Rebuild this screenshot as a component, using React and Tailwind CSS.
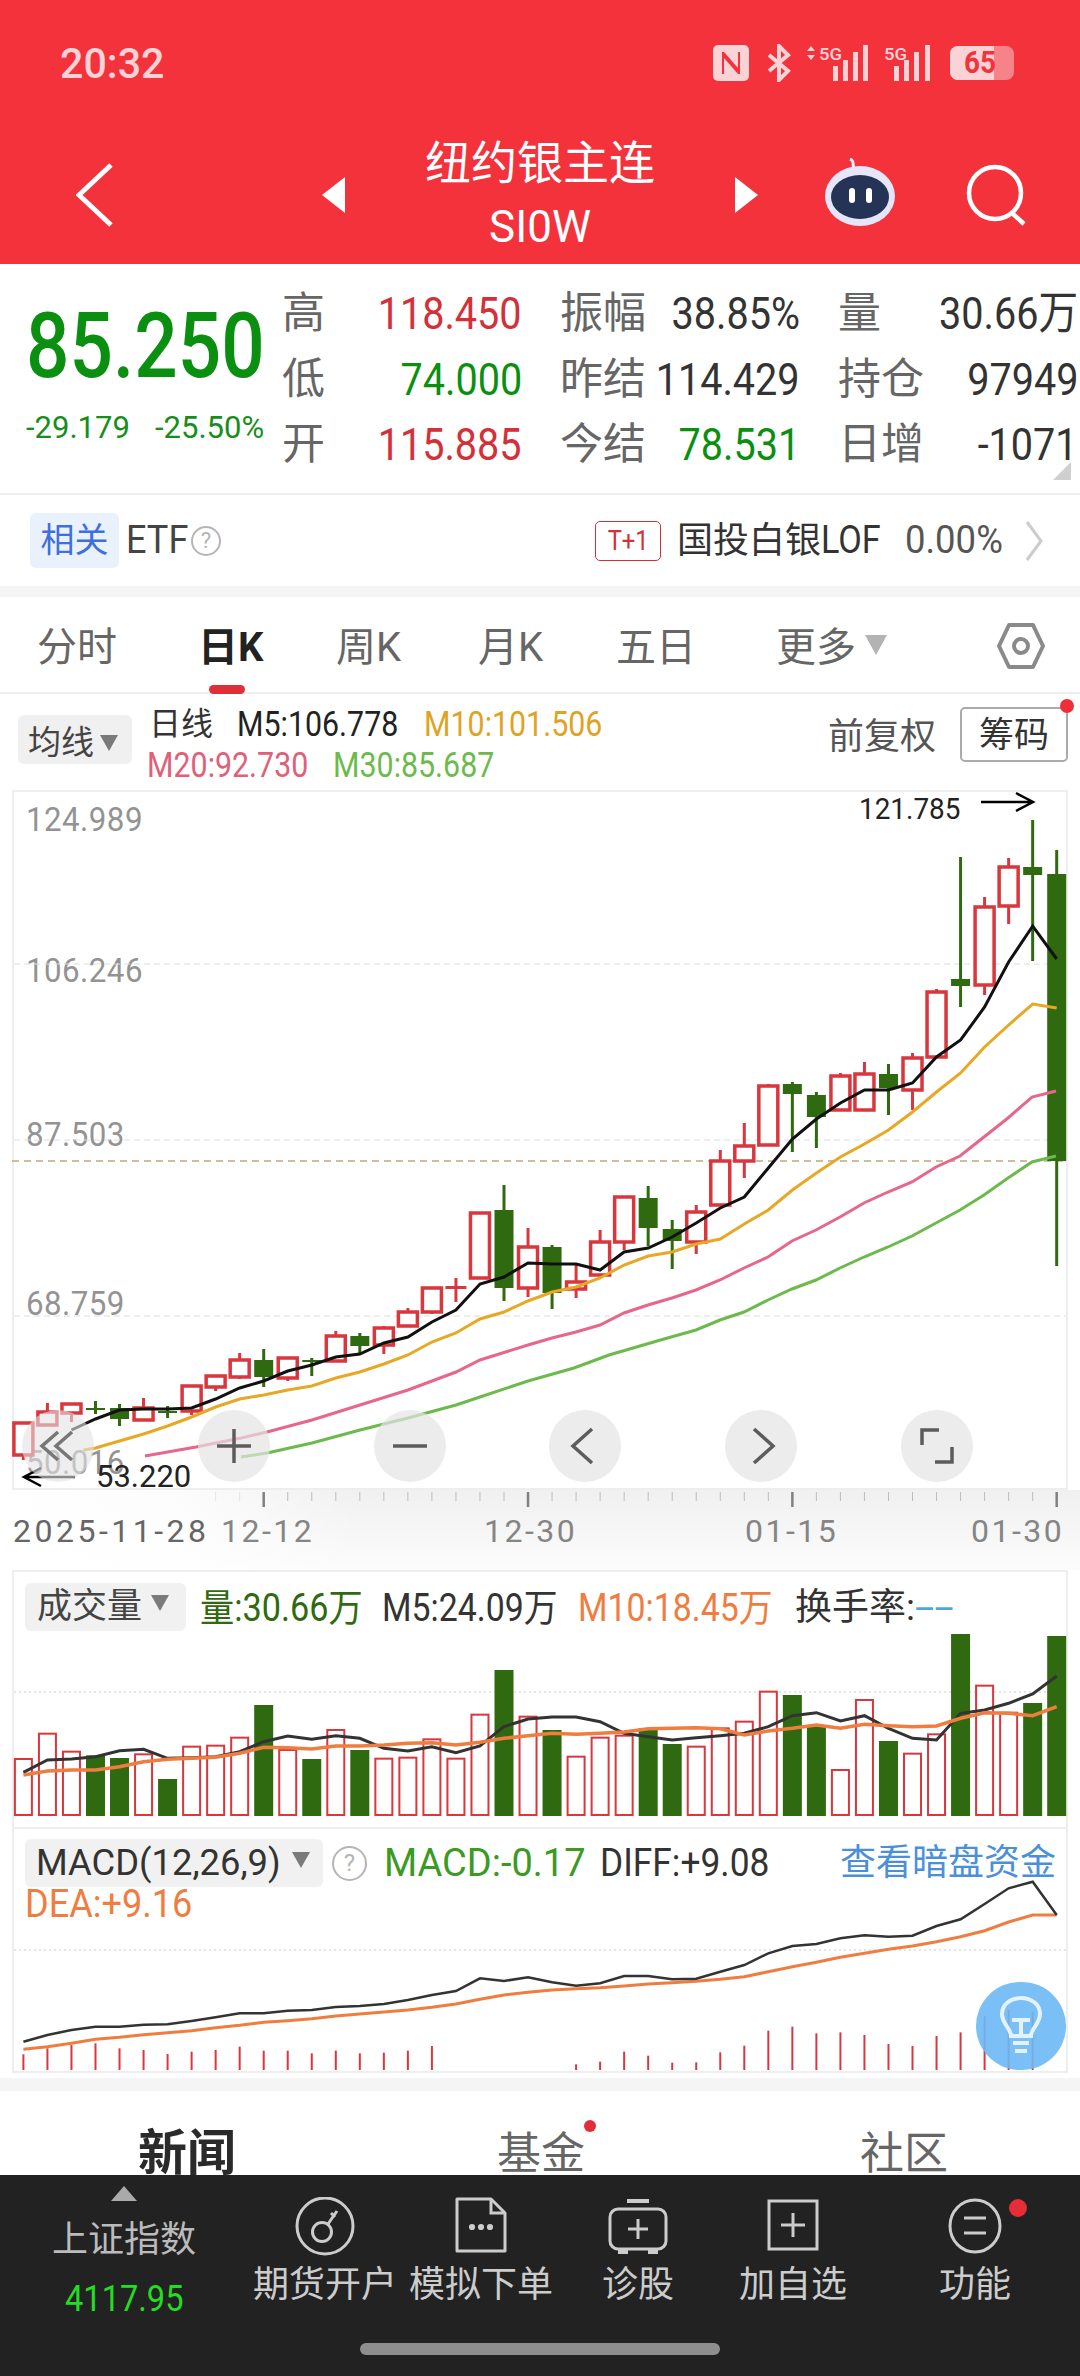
import React from "react";

const vx = (i) => 23.4 + 24.03 * i;
const RED = "#d9363e";
const GREEN = "#2f6a10";

const candles = [
  [1423, 1455, 1423, 1460, 1],
  [1412, 1425, 1403, 1425, 1],
  [1404, 1413, 1404, 1422, 1],
  [1408, 1409, 1401, 1414, 0],
  [1408, 1419, 1404, 1426, 0],
  [1408, 1420, 1398, 1420, 1],
  [1411, 1412, 1406, 1418, 0],
  [1386, 1411, 1386, 1415, 1],
  [1376, 1387, 1376, 1391, 1],
  [1360, 1377, 1353, 1379, 1],
  [1360, 1377, 1349, 1387, 0],
  [1358, 1378, 1358, 1381, 1],
  [1360, 1361, 1358, 1376, 0],
  [1336, 1361, 1331, 1361, 1],
  [1336, 1346, 1333, 1353, 0],
  [1328, 1345, 1326, 1354, 1],
  [1312, 1326, 1308, 1326, 1],
  [1288, 1312, 1288, 1314, 1],
  [1286, 1288, 1278, 1302, 1],
  [1213, 1278, 1213, 1278, 1],
  [1210, 1288, 1185, 1301, 0],
  [1247, 1288, 1228, 1297, 1],
  [1247, 1293, 1245, 1309, 0],
  [1282, 1289, 1265, 1298, 1],
  [1242, 1275, 1230, 1275, 1],
  [1197, 1242, 1197, 1250, 1],
  [1198, 1228, 1186, 1246, 0],
  [1229, 1241, 1220, 1269, 0],
  [1212, 1242, 1205, 1254, 1],
  [1161, 1205, 1150, 1205, 1],
  [1146, 1161, 1123, 1178, 1],
  [1086, 1145, 1084, 1146, 1],
  [1084, 1094, 1082, 1152, 0],
  [1095, 1117, 1092, 1148, 0],
  [1076, 1110, 1073, 1110, 1],
  [1074, 1110, 1062, 1110, 1],
  [1074, 1088, 1064, 1115, 0],
  [1058, 1090, 1053, 1110, 1],
  [992, 1057, 989, 1057, 1],
  [979, 986, 857, 1007, 0],
  [907, 985, 897, 995, 1],
  [867, 906, 858, 924, 1],
  [867, 875, 820, 961, 0],
  [874, 1161, 850, 1266, 0],
];

const ma5 = [[2,1430],[3,1419],[4,1410],[5,1409],[6,1409],[7,1408],[8,1399],[9,1388],[10,1381],[11,1371],[12,1365],[13,1357],[14,1354],[15,1343],[16,1337],[17,1322],[18,1310],[19,1284],[20,1277],[21,1263],[22,1264],[23,1264],[24,1270],[25,1252],[26,1248],[27,1237],[28,1223],[29,1208],[30,1197],[31,1168],[32,1139],[33,1119],[34,1103],[35,1090],[36,1090],[37,1083],[38,1057],[39,1040],[40,1007],[41,962],[42,926],[43,959]];
const ma10 = [[2.5,1450],[3,1448],[4,1441],[5,1434],[6,1426],[7,1417],[8,1407],[9,1399],[10,1395],[11,1390],[12,1386],[13,1378],[14,1372],[15,1364],[16,1355],[17,1342],[18,1333],[19,1319],[20,1312],[21,1301],[22,1292],[23,1287],[24,1278],[25,1265],[26,1256],[27,1252],[28,1244],[29,1239],[30,1224],[31,1210],[32,1190],[33,1173],[34,1157],[35,1144],[36,1130],[37,1112],[38,1092],[39,1073],[40,1047],[41,1025],[42,1004],[43,1008]];
const ma20 = [[145,1456],[196,1447],[241,1438],[267,1432],[312,1420],[360,1405],[408,1390],[456,1372],[480,1360],[528,1345],[552,1338],[576,1332],[600,1325],[624,1313],[648,1305],[672,1298],[696,1290],[720,1280],[744,1268],[768,1257],[792,1241],[816,1230],[840,1217],[864,1203],[888,1192],[912,1182],[936,1167],[960,1156],[984,1137],[1008,1118],[1032,1097],[1056,1091]];
const ma30 = [[241,1457],[267,1453],[312,1443],[360,1430],[408,1418],[456,1405],[480,1397],[528,1381],[574,1368],[609,1355],[664,1339],[696,1330],[720,1320],[744,1312],[768,1300],[792,1289],[816,1280],[840,1268],[864,1257],[888,1247],[912,1236],[936,1223],[960,1210],[984,1195],[1008,1178],[1032,1162],[1056,1156]];

const pts = (a) => a.map(([i, y]) => `${vx(i).toFixed(1)},${y}`).join(" ");
const ptsXY = (a) => a.map(([x, y]) => `${x},${y}`).join(" ");
const seq = (a, f) => a.map((z, i) => `${vx(i).toFixed(1)},${f(z).toFixed(1)}`).join(" ");

const volTops = [[567,1],[491,1],[545,1],[556,0],[564,0],[553,1],[627,0],[530,1],[527,1],[503,1],[405,0],[540,1],[567,0],[480,1],[540,0],[566,1],[563,1],[508,1],[566,1],[434,1],[300,0],[440,1],[480,0],[560,1],[503,1],[497,1],[475,0],[522,0],[530,1],[475,1],[455,1],[365,1],[375,0],[470,0],[600,1],[390,1],[513,0],[551,1],[493,1],[192,0],[347,1],[428,1],[399,0],[198,0]];
const volMa5 = [607,570,567,560,542,538,565,563,560,545,515,498,508,497,505,535,543,530,548,528,470,447,441,441,455,490,500,510,503,497,490,470,437,428,453,437,475,505,510,430,420,400,372,318];
const volMa10 = [615,603,600,600,590,575,568,565,562,550,532,533,537,528,528,525,520,518,525,517,505,497,490,493,490,486,476,475,473,476,495,483,475,465,475,463,467,470,468,445,428,430,437,410];

const diff = [665,645,630,620,620,614,613,603,592,580,580,572,570,561,558,552,540,525,513,475,483,472,487,497,490,468,468,478,476,455,435,400,378,372,355,346,350,347,318,298,252,205,185,285];
const dea = [688,680,670,658,652,644,638,632,623,616,607,602,596,588,582,576,570,562,552,538,525,517,510,506,503,498,492,488,484,478,470,455,440,427,412,400,388,378,365,350,332,306,285,285];
const hist = [703,685,675,670,685,690,702,695,690,680,692,692,700,692,700,698,692,678,0,0,0,0,0,733,725,695,707,728,727,697,677,632,620,640,637,645,672,678,648,637,588,570,575,0];

function Stat({ label, value, color }) {
  return (
    <div className="flex items-center h-[65.5px] w-[240px]">
      <span className="shrink-0 whitespace-nowrap text-[43px] text-[#666666] leading-none">{label}</span>
      <span className="flex-1 min-w-0 flex justify-end">
        <span className={`shrink-0 text-[45px] leading-none origin-right scale-x-[.88] whitespace-nowrap ${color}`}>{value}</span>
      </span>
    </div>
  );
}

function Tri({ dir, className }) {
  const d = dir === "left" ? "M23 0V36L0 18Z" : "M0 0V36L23 18Z";
  return (
    <svg width="23" height="36" viewBox="0 0 23 36" className={className}>
      <path d={d} fill="#ffffff" />
    </svg>
  );
}

function Caret({ className }) {
  return (
    <svg width="18" height="18" viewBox="0 0 18 18" className={className}>
      <path d="M0 1H18L9 17Z" fill="#7a7a7a" />
    </svg>
  );
}

function Round({ dim, children }) {
  return (
    <div className={`w-[72px] h-[72px] rounded-full flex items-center justify-center ${dim ? "bg-[#e2e2e2]/60" : "bg-[#e4e4e4]/70"}`}>
      <svg width="40" height="40" viewBox="0 0 40 40" fill="none" stroke="#5c5c5c" strokeWidth="3.5">
        {children}
      </svg>
    </div>
  );
}

function NavItem({ w, label, children }) {
  return (
    <div className={`flex flex-col items-center pt-[22px] shrink-0 ${w}`}>
      <svg width="80" height="60" viewBox="0 0 80 60" fill="none" stroke="#cccccc" strokeWidth="3">
        {children}
      </svg>
      <span className="mt-[6px] text-[36px] leading-[44px] text-[#cccccc] whitespace-nowrap">{label}</span>
    </div>
  );
}

export default function App() {
  return (
    <div className="relative w-[1080px] h-[2376px] overflow-hidden bg-white font-['Roboto','Noto_Sans_CJK_SC',sans-serif]">
      {/* red header */}
      <header className="h-[264px] bg-[#f3323c] text-white">
        <div className="h-[126px] flex items-center pl-[60px] pr-[66px] justify-between">
          <span className="text-[42px] font-medium text-[#fbd3d6] origin-left scale-x-[.98]">20:32</span>
          <div className="flex items-center">
            <svg width="36" height="36" viewBox="0 0 36 36">
              <rect width="36" height="36" rx="5" fill="#fbd3d6" />
              <path d="M9 7V29L11 29V13L25 29H27V7H25V23L11 7Z" fill="#f3323c" />
            </svg>
            <svg width="26" height="38" viewBox="0 0 26 38" className="ml-[17px]" fill="none" stroke="#fbd3d6" strokeWidth="4">
              <path d="M3 11L22 27L13 36V2L22 11L3 27" />
            </svg>
            <svg width="64" height="38" viewBox="0 0 64 38" className="ml-[14px]" fill="#fbd3d6">
              <path d="M5 2L9 7H1ZM5 16L1 11H9Z" />
              <text x="13" y="16" fontSize="16" fontWeight="500" textLength="23" lengthAdjust="spacingAndGlyphs">5G</text>
              <rect x="27" y="22" width="5" height="15" />
              <rect x="37" y="16" width="5" height="21" />
              <rect x="47" y="8" width="5" height="29" />
              <rect x="57" y="1" width="5" height="36" />
            </svg>
            <svg width="52" height="38" viewBox="0 0 52 38" className="ml-[14px]" fill="#fbd3d6">
              <text x="0" y="16" fontSize="16" fontWeight="500" textLength="23" lengthAdjust="spacingAndGlyphs">5G</text>
              <rect x="10" y="22" width="5" height="15" />
              <rect x="20" y="16" width="5" height="21" />
              <rect x="30" y="8" width="5" height="29" />
              <rect x="41" y="1" width="5" height="36" />
            </svg>
            <div className="relative ml-[14px] w-[64px] h-[34px] rounded-[8px] bg-[#f7838a]">
              <div className="absolute left-0 top-0 h-full w-[44px] rounded-l-[8px] bg-[#fbd3d6]" />
              <span className="absolute left-[14px] top-0 text-[31px] leading-[34px] font-bold text-[#f3323c] origin-left scale-x-[.9]">65</span>
            </div>
          </div>
        </div>
        <div className="h-[138px] flex items-center">
          <svg width="37" height="64" viewBox="0 0 37 64" className="ml-[76px]" fill="none" stroke="#ffffff" strokeWidth="5">
            <path d="M35 2L3 32L35 62" />
          </svg>
          <Tri dir="left" className="ml-[209px]" />
          <div className="w-[390px] self-start pt-[9px] flex flex-col items-center">
            <span className="text-[46px] leading-[56px]">纽约银主连</span>
            <span className="text-[44px] leading-[44px] mt-[14px]">SI0W</span>
          </div>
          <Tri dir="right" />
          <svg width="72" height="68" viewBox="0 0 72 68" className="ml-[66px] mt-[-6px]">
            <path d="M30 12C28 6 31 3 26 1" stroke="#f1f1fc" strokeWidth="3" fill="none" />
            <ellipse cx="36" cy="38" rx="35" ry="30" fill="#e6e6f8" />
            <ellipse cx="36" cy="39" rx="29" ry="22" fill="#243356" />
            <rect x="25" y="30" width="6" height="15" rx="3" fill="#ffffff" />
            <rect x="42" y="30" width="6" height="15" rx="3" fill="#ffffff" />
          </svg>
          <svg width="62" height="62" viewBox="0 0 62 62" className="ml-[70px]" fill="none" stroke="#ffffff" strokeWidth="4.5">
            <circle cx="29" cy="29" r="26" />
            <path d="M46 49L58 60" />
          </svg>
        </div>
      </header>

      {/* quote block */}
      <section className="relative h-[231px] border-b-2 border-[#eeeeee] flex">
        <div className="w-[282px] pl-[26px] shrink-0">
          <div className="mt-[38px] h-[90px] text-[90px] leading-[90px] font-medium text-[#0b8f10] origin-left scale-x-[.85] whitespace-nowrap">85.250</div>
          <div className="mt-[16px] h-[40px] flex items-center text-[31px] text-[#168f1a] whitespace-nowrap">
            <span className="w-[129px]">-29.179</span>
            <span>-25.50%</span>
          </div>
        </div>
        <div className="pt-[17px] shrink-0">
          <Stat label="高" value="118.450" color="text-[#d4303a]" />
          <Stat label="低" value="74.000" color="text-[#0b8f10]" />
          <Stat label="开" value="115.885" color="text-[#d4303a]" />
        </div>
        <div className="pt-[17px] ml-[38px] shrink-0">
          <Stat label="振幅" value="38.85%" color="text-[#333333]" />
          <Stat label="昨结" value="114.429" color="text-[#333333]" />
          <Stat label="今结" value="78.531" color="text-[#0b8f10]" />
        </div>
        <div className="pt-[17px] ml-[38px] shrink-0">
          <Stat label="量" value="30.66万" color="text-[#333333]" />
          <Stat label="持仓" value="97949" color="text-[#333333]" />
          <Stat label="日增" value="-1071" color="text-[#333333]" />
        </div>
        <svg width="18" height="18" viewBox="0 0 18 18" className="absolute right-[9px] bottom-[13px]">
          <path d="M18 0V18H0Z" fill="#cfcfcf" />
        </svg>
      </section>

      {/* related row */}
      <section className="h-[91px] flex items-center pl-[30px] whitespace-nowrap">
        <span className="w-[89px] h-[55px] rounded-[6px] bg-[#e9f1fd] text-[#3f6fdc] text-[34px] flex items-center justify-center">相关</span>
        <span className="ml-[7px] w-[65px] text-[38px] text-[#444444] origin-left scale-x-[.95]">ETF</span>
        <span className="w-[30px] h-[30px] rounded-full border-2 border-[#b5b5b5] text-[#b5b5b5] text-[22px] leading-none flex items-center justify-center">?</span>
        <span className="ml-[374px] w-[66px] h-[40px] rounded-[5px] border border-[#d4303a] text-[#d4303a] text-[28px] flex items-center justify-center"><span className="scale-x-[.85]">T+1</span></span>
        <span className="ml-[16px] w-[207px] text-[36px] text-[#333333]">国投白银<span className="inline-block origin-left scale-x-[.9] text-[38px]">LOF</span></span>
        <span className="ml-[21px] w-[120px] text-[38px] text-[#555555] origin-left scale-x-[.96]">0.00%</span>
        <svg width="18" height="42" viewBox="0 0 18 42" fill="none" stroke="#cccccc" strokeWidth="3">
          <path d="M2 2L16 21L2 40" />
        </svg>
      </section>
      <div className="h-[11px] bg-[#f5f5f5]" />

      {/* period tabs */}
      <nav className="h-[97px] border-b-2 border-[#eeeeee] flex items-center pl-[37px] pt-[6px] text-[40px] text-[#666666]">
        <span className="w-[161px] shrink-0">分时</span>
        <span className="relative w-[138px] shrink-0 font-bold text-[#222222]">
          日K
          <span className="absolute left-[11px] top-[67px] w-[36px] h-[9px] rounded-full bg-[#e02f38]" />
        </span>
        <span className="w-[142px] shrink-0">周K</span>
        <span className="w-[138px] shrink-0">月K</span>
        <span className="w-[160px] shrink-0">五日</span>
        <span className="w-[221px] shrink-0 flex items-center">
          更多
          <svg width="22" height="20" viewBox="0 0 22 20" className="ml-[9px] mt-[-6px]"><path d="M0 0H22L11 20Z" fill="#b3b3b3" /></svg>
        </span>
        <svg width="48" height="48" viewBox="0 0 48 48" fill="none" stroke="#8a8a8a" strokeWidth="4" className="mt-[-4px]">
          <path d="M12 3H36L46 24L36 45H12L2 24Z" strokeLinejoin="round" />
          <circle cx="24" cy="24" r="7" />
        </svg>
      </nav>

      {/* chart legend */}
      <section className="relative h-[96px] flex pl-[18px] items-start">
        <div className="mt-[21px] w-[114px] h-[49px] rounded-[6px] bg-[#f0f0f0] flex items-center pl-[10px] pt-[6px] text-[33px] text-[#444444]">
          均线
          <Caret className="ml-[6px]" />
        </div>
        <div className="ml-[15px] mt-[9px] text-[34.5px] leading-[42px] whitespace-nowrap">
          <div className="flex">
            <span className="text-[#333333] w-[90px] pl-[2px] text-[32px]">日线</span>
            <span className="text-[#222222] w-[187px] origin-left scale-x-[.88]">M5:106.778</span>
            <span className="text-[#e0a31f] origin-left scale-x-[.88]">M10:101.506</span>
          </div>
          <div className="flex mt-[-1px]">
            <span className="text-[#e0607a] w-[186px] origin-left scale-x-[.88]">M20:92.730</span>
            <span className="text-[#6cba4c] origin-left scale-x-[.88]">M30:85.687</span>
          </div>
        </div>
        <span className="absolute left-[828px] top-[20px] text-[36px] leading-[46px] text-[#555555]">前复权</span>
        <span className="absolute left-[960px] top-[13px] w-[108px] h-[55px] pt-[3px] rounded-[5px] border-2 border-[#aaaaaa] text-[35px] text-[#333333] flex items-center justify-center">筹码</span>
        <span className="absolute left-[1060px] top-[5px] w-[14px] h-[14px] rounded-full bg-[#f02d3a]" />
      </section>

      {/* main chart */}
      <section className="relative h-[700px]">
        <div className="absolute left-[12px] top-0 w-[1056px] h-full border-2 border-[#eeeeee]" />
        {[["124.989", 7], ["106.246", 158], ["87.503", 322], ["68.759", 491], ["50.016", 650]].map(([t, top]) => (
          <span key={t} className="absolute left-[26px] text-[34px] leading-[44px] text-[#939393] origin-left scale-x-[.92] tracking-[.5px]" style={{ top }}>{t}</span>
        ))}
        <svg className="absolute left-0 top-0" width="1080" height="700" viewBox="0 790 1080 700" fill="none">
          <g stroke="#dddddd" strokeWidth="1" strokeDasharray="6 4">
            <path d="M14 964H1066" />
            <path d="M14 1140H1066" />
            <path d="M14 1316H1066" />
          </g>
          <path d="M12 1161H1066" stroke="#bda77f" strokeWidth="1.5" strokeDasharray="7 5" />
          {candles.map(([a, b, t, w, up], i) => {
            const x = vx(i);
            const c = up ? RED : GREEN;
            return (
              <g key={i}>
                <path d={`M${x} ${t}V${w}`} stroke={c} strokeWidth="3" />
                {up ? (
                  b - a < 4 ? (
                    <rect x={x - 10.5} y={a} width="21" height="3" fill={c} />
                  ) : (
                    <rect x={x - 9.5} y={a} width="19" height={b - a} fill="#ffffff" stroke={c} strokeWidth="3.5" />
                  )
                ) : (
                  <rect x={x - 9.5} y={a} width="19" height={Math.max(b - a, 2)} fill={c} />
                )}
              </g>
            );
          })}
          <polyline points={ptsXY(ma30)} stroke="#6cba4c" strokeWidth="3" />
          <polyline points={ptsXY(ma20)} stroke="#e6678a" strokeWidth="3" />
          <polyline points={pts(ma10)} stroke="#e8a825" strokeWidth="3" />
          <polyline points={pts(ma5)} stroke="#111111" strokeWidth="3" />
          <path d="M981 802H1032M1016 793L1033 802L1016 811" stroke="#000000" strokeWidth="2.5" />
          <path d="M75 1477H24M41 1468L24 1477L41 1486" stroke="#000000" strokeWidth="2.5" />
        </svg>
        <span className="absolute left-[859px] top-[0px] text-[30px] leading-[38px] text-[#222222] origin-left scale-x-[.93]">121.785</span>
        <span className="absolute left-[96px] top-[668px] text-[31px] leading-[38px] text-[#222222]">53.220</span>
        <div className="absolute left-[22px] top-[620px] flex gap-[103.8px]">
          <Round dim>
            <path d="M20 6L4 20L20 34M34 6L18 20L34 34" stroke="#777777" />
          </Round>
          <Round><path d="M20 3V37M3 20H37" /></Round>
          <Round><path d="M3 20H37" /></Round>
          <Round><path d="M27 3L8 20L27 37" /></Round>
          <Round><path d="M13 3L32 20L13 37" /></Round>
          <Round><path d="M5 19V4H22M35 21V36H18" /></Round>
        </div>
      </section>

      {/* time axis */}
      <section className="relative h-[80px] bg-linear-to-b from-[#f0f0f0] to-[#fcfcfc]">
        <div className="absolute left-0 top-0 w-[360px] h-full bg-linear-to-r from-white via-white/80 to-transparent" />
        <svg className="absolute left-0 top-0" width="1080" height="20" viewBox="0 0 1080 20" fill="none">
          {candles.map((_, i) =>
            i < 8 ? null : (i - 10) % 11 === 0 ? (
              <path key={i} d={`M${vx(i)} 2V17`} stroke="#808080" strokeWidth="2.5" />
            ) : (
              <path key={i} d={`M${vx(i)} 2V11`} stroke={i < 10 ? "#e4e4e4" : "#bcbcbc"} strokeWidth="1" />
            )
          )}
        </svg>
        <div className="relative flex pl-[13px] pt-[21px] text-[32px] leading-[40px] tracking-[2.5px] text-[#858585] whitespace-nowrap">
          <span className="w-[208px] shrink-0 text-[#666666] tracking-[3.5px]">2025-11-28</span>
          <span className="w-[263px] shrink-0">12-12</span>
          <span className="w-[261px] shrink-0">12-30</span>
          <span className="w-[226px] shrink-0">01-15</span>
          <span className="shrink-0">01-30</span>
        </div>
      </section>

      {/* volume */}
      <section className="relative h-[257px]">
        <div className="absolute left-[12px] top-0 w-[1056px] h-full border-x-2 border-t-2 border-[#eeeeee]" />
        <svg className="absolute left-0 top-0" width="1080" height="257" viewBox="0 1570 1080 257" fill="none">
          <path d="M14 1692H1066" stroke="#dddddd" strokeWidth="1.5" strokeDasharray="2 3" />
          {volTops.map(([z, up], i) => {
            const x = vx(i);
            const top = 1570 + z / 3;
            return up ? (
              <rect key={i} x={x - 8.5} y={top} width="17" height={1815 - top} fill="#ffffff" stroke={RED} strokeWidth="2" />
            ) : (
              <rect key={i} x={x - 9.5} y={top} width="19" height={1816 - top} fill={GREEN} />
            );
          })}
          <polyline points={seq(volMa5, (z) => 1570 + z / 3)} stroke="#333333" strokeWidth="3" />
          <polyline points={seq(volMa10, (z) => 1570 + z / 3)} stroke="#ef7d3f" strokeWidth="3.5" />
        </svg>
        <div className="relative flex items-center pt-[11px] pl-[25px] text-[38px] leading-[48px] whitespace-nowrap">
          <span className="w-[161px] h-[48px] rounded-[6px] bg-[#f1f1f1] pl-[12px] flex items-center text-[35px] text-[#444444] shrink-0">
            成交量
            <Caret className="ml-[9px] mt-[-8px]" />
          </span>
          <span className="ml-[14px] mt-[3px] w-[182px] text-[#2f6a10] origin-left scale-x-[.9] shrink-0">量:30.66万</span>
          <span className="mt-[3px] w-[196px] text-[#333333] origin-left scale-x-[.89] shrink-0">M5:24.09万</span>
          <span className="mt-[3px] w-[217px] text-[#ef7d3f] origin-left scale-x-[.89] shrink-0">M10:18.45万</span>
          <span className="mt-[3px] text-[#333333] text-[37px] shrink-0">换手率:<span className="inline-block origin-left scale-x-[1.9] text-[#4aa8e0]">--</span></span>
        </div>
      </section>

      {/* MACD */}
      <section className="relative h-[251px]">
        <div className="absolute left-[12px] top-0 w-[1056px] h-[246px] border-x-2 border-y-2 border-[#eeeeee]" />
        <svg className="absolute left-0 top-0" width="1080" height="251" viewBox="0 1827 1080 251" fill="none">
          <path d="M14 1950H1066" stroke="#dddddd" strokeWidth="1.5" strokeDasharray="2 3" />
          {hist.map((z, i) =>
            z ? <path key={i} d={`M${vx(i)} ${1820 + z / 3}V2070`} stroke={RED} strokeWidth="2" /> : null
          )}
          <polyline points={seq(dea, (z) => 1820 + z / 3)} stroke="#ef7d3f" strokeWidth="3" />
          <polyline points={seq(diff, (z) => 1820 + z / 3)} stroke="#333333" strokeWidth="2.5" />
        </svg>
        <div className="relative pt-[12px] pl-[25px] whitespace-nowrap">
          <div className="flex items-center text-[38px] leading-[48px]">
            <span className="w-[298px] h-[48px] rounded-[6px] bg-[#f1f1f1] pl-[11px] flex items-center text-[36px] text-[#333333] shrink-0">
              <span className="w-[256px] shrink-0 origin-left scale-x-[1.01]">MACD(12,26,9)</span>
              <Caret className="mt-[-6px]" />
            </span>
            <span className="ml-[9px] w-[35px] h-[35px] rounded-full border-2 border-[#b5b5b5] text-[#b5b5b5] text-[24px] leading-none flex items-center justify-center shrink-0">?</span>
            <span className="ml-[17px] w-[216px] text-[#3a9a22] shrink-0">MACD:-0.17</span>
            <span className="w-[240px] text-[#333333] origin-left scale-x-[.93] shrink-0">DIFF:+9.08</span>
            <span className="text-[36px] text-[#4a90d9] shrink-0">查看暗盘资金</span>
          </div>
          <div className="mt-[-5px] text-[38px] leading-[44px] text-[#ef7d3f] origin-left scale-x-[.95]">DEA:+9.16</div>
        </div>
        <div className="absolute left-[976px] top-[155px] w-[90px] h-[88px] rounded-full bg-[#6bb8f5]/90 flex items-center justify-center">
          <svg width="44" height="60" viewBox="0 0 44 60" fill="none" stroke="#e4f2fd" strokeWidth="4">
            <path d="M12 40C12 32 3 28 3 18C3 8 12 2 22 2C32 2 41 8 41 18C41 28 32 32 32 40Z" />
            <path d="M13 24H31M22 24V40M14 47H30M16 55H28" />
          </svg>
        </div>
      </section>

      <div className="h-[13px] bg-[#f5f5f5]" />

      {/* bottom tabs */}
      <section className="h-[84px] flex items-start pt-[35px] overflow-hidden text-[44px] leading-[56px] text-[#666666]">
        <span className="ml-[138px] w-[359px] shrink-0 font-bold text-[49px] text-[#2a2a2a]">新闻</span>
        <span className="relative w-[363px] shrink-0">
          基金
          <span className="absolute left-[87px] top-[-6px] w-[12px] h-[12px] rounded-full bg-[#e02f38]" />
        </span>
        <span className="shrink-0">社区</span>
      </section>

      {/* dark toolbar */}
      <footer className="relative h-[201px] bg-[#222222] flex">
        <div className="w-[248px] shrink-0 flex flex-col items-center pt-[11px]">
          <svg width="26" height="15" viewBox="0 0 26 15"><path d="M13 0L26 15H0Z" fill="#aaaaaa" /></svg>
          <span className="mt-[15px] text-[36px] leading-[48px] text-[#bbbbbb]">上证指数</span>
          <span className="mt-[15px] text-[37px] leading-[40px] text-[#22dd22] origin-center scale-x-[.88]">4117.95</span>
        </div>
        <NavItem w="w-[154px]" label="期货开户">
          <ellipse cx="40" cy="29" rx="28" ry="28" />
          <circle cx="37" cy="35" r="9.5" />
          <path d="M43 27L52 14M46 16L50 20" />
        </NavItem>
        <NavItem w="w-[158px]" label="模拟下单">
          <path d="M16 2H50L64 16V54H16Z" strokeLinejoin="round" />
          <path d="M50 2V16H64" />
          <circle cx="31" cy="30" r="1.6" fill="#cccccc" />
          <circle cx="40" cy="30" r="1.6" fill="#cccccc" />
          <circle cx="49" cy="30" r="1.6" fill="#cccccc" />
        </NavItem>
        <NavItem w="w-[156px]" label="诊股">
          <path d="M29 4H51" strokeWidth="4" />
          <rect x="12" y="12" width="56" height="40" rx="8" />
          <path d="M40 22V42M30 32H50" />
          <path d="M20 55H30M50 55H60" strokeWidth="4" />
        </NavItem>
        <NavItem w="w-[154px]" label="加自选">
          <rect x="16" y="4" width="48" height="48" />
          <path d="M40 16V40M28 28H52" />
        </NavItem>
        <NavItem w="w-[210px]" label="功能">
          <ellipse cx="40" cy="29" rx="25" ry="26" />
          <path d="M29 21H51M29 36H51" />
        </NavItem>
        <span className="absolute left-[1009px] top-[24px] w-[18px] h-[18px] rounded-full bg-[#e52e38]" />
        <span className="absolute left-[360px] top-[168px] w-[360px] h-[12px] rounded-full bg-[#8e8e8e]" />
      </footer>
    </div>
  );
}
